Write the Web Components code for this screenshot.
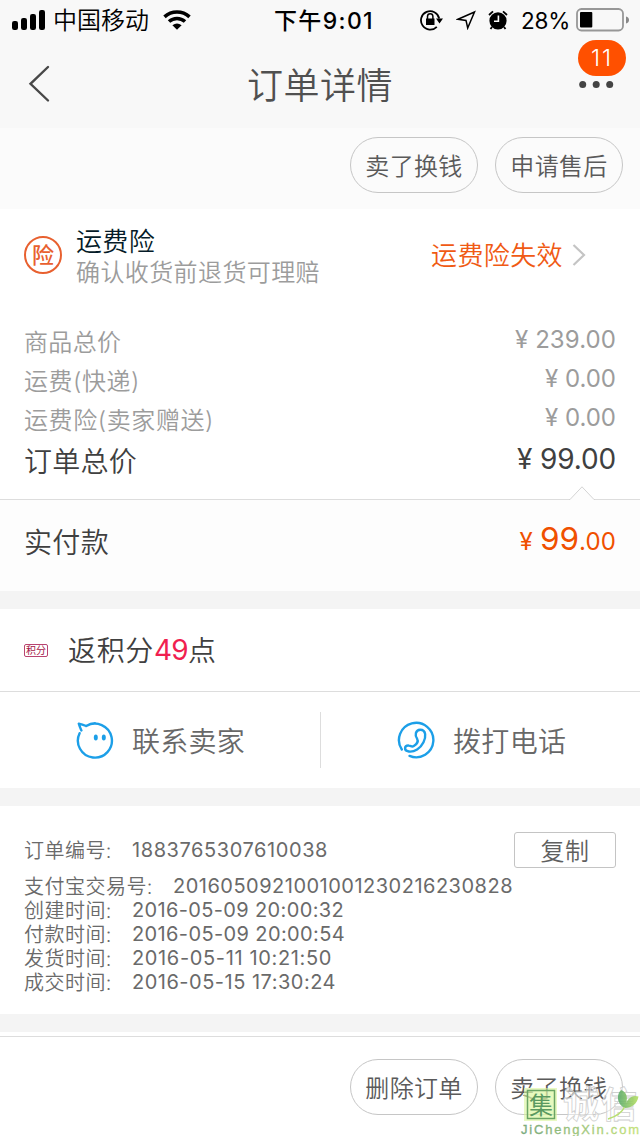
<!DOCTYPE html>
<html lang="zh-CN">
<head>
<meta charset="utf-8">
<title>订单详情</title>
<style>
html, body { margin: 0; background: #fff; }
body { width: 640px; height: 1136px; overflow: hidden; font-family: Inter, "Noto Sans CJK SC", sans-serif; font-weight: 350; }
</style>
</head>
<body>
<order-page></order-page>
<script>
const define = (name, html, after) => customElements.define(name, class extends HTMLElement {
  connectedCallback() {
    if (!this.shadowRoot) this.attachShadow({ mode: 'open' }).innerHTML = html;
    if (after) after(this);
  }
});

/* Text line tracked to a given width: size, w (width), c (colour), wt (weight), pad (space above) */
define('fit-text', `<style>:host{display:block;white-space:pre;line-height:1.2;flex:none}span{display:inline-block}</style><span><slot></slot></span>`, el => {
  const a = n => el.getAttribute(n);
  el.style.fontSize = a('size') + 'px';
  if (a('c')) el.style.color = a('c');
  /* figures are set one step heavier than the Chinese text */
  const wt = a('wt') || (/^[¥\d.:\- ]+$/.test(el.textContent) ? '400' : '');
  if (wt) el.style.fontWeight = wt;
  if (a('pad')) el.style.paddingTop = a('pad') + 'px';
  const w = +a('w');
  if (w) {
    const s = el.shadowRoot.querySelector('span');
    s.style.letterSpacing = (w - s.getBoundingClientRect().width) / [...el.textContent].length + 'px';
    el.style.width = w + 'px';
  }
});

define('pill-button', `<style>
:host{box-sizing:border-box;display:flex;align-items:center;justify-content:center;width:128px;height:56px;border:1px solid #c6c6c6;border-radius:28px;color:#5a5a5a}
</style><fit-text size="24" w="97.4" pad="4"><slot></slot></fit-text>`, el => {
  const t = el.shadowRoot.querySelector('fit-text');
  t.textContent = el.textContent;
  t.shadowRoot.querySelector('span').style.letterSpacing = '.35px';
});

define('section-gap', `<style>:host{display:block;height:18px;background:#f4f4f4}</style>`);

define('status-bar', `<style>
:host{display:flex;align-items:center;height:40px;color:#000}
svg{display:block;flex:none}
.sig{margin-left:12px}.car{margin-left:7px}.wifi{margin-left:14px}.time{margin-left:83px}
.lock{margin-left:46px}.loc{margin-left:12px}.alarm{margin-left:12px}.pct{margin-left:13px}.bat{margin-left:6px}
</style>
<svg class="sig" width="34" height="20" viewBox="0 0 34 20"><rect y="11" width="6" height="9" rx="2.2"/><rect x="9" y="8" width="6" height="12" rx="2.2"/><rect x="18" y="4" width="6" height="16" rx="2.2"/><rect x="27" width="6" height="20" rx="2.2"/></svg>
<fit-text class="car" size="24" w="96" pad="3">中国移动</fit-text>
<svg class="wifi" width="28" height="20" viewBox="0 0 28 20"><path d="M1.5 6.8A18.5 18.5 0 0 1 26.5 6.8M6 11.5A12 12 0 0 1 22 11.5" fill="none" stroke="#000" stroke-width="3.6"/><path d="M14 19.8 9.4 15.2Q14 11.6 18.6 15.2Z"/></svg>
<fit-text class="time" size="23" w="100" wt="500" pad="3">下午9:01</fit-text>
<svg class="lock" width="24" height="22" viewBox="0 0 24 22"><path d="M16.8 17.8A9.2 9.2 0 1 1 19.2 9.5" fill="none" stroke="#000" stroke-width="1.8"/><path d="M16 9.5H23L19.5 14.5ZM6 9.5H14.5V16H6Z"/><path d="M7.5 10V7.5a2.7 2.7 0 0 1 5.4 0V10" fill="none" stroke="#000" stroke-width="1.5"/></svg>
<svg class="loc" width="20" height="20" viewBox="0 0 20 20"><path d="M18.5 2 2 9.3 10 10.4 11.7 18Z" fill="none" stroke="#000" stroke-width="1.5"/></svg>
<svg class="alarm" width="20" height="20" viewBox="0 0 20 20"><circle cx="10" cy="10.8" r="8.6"/><path d="M1 5 5 1.4M15 1.4 19 5M4 17 2.5 19M16 17 17.5 19" fill="none" stroke="#000" stroke-width="1.8"/><path d="M10.4 5.5V11.2H6" fill="none" stroke="#fff" stroke-width="1.6"/></svg>
<fit-text class="pct" size="22.5" w="49" wt="400" pad="1">28%</fit-text>
<svg class="bat" width="54" height="24" viewBox="0 0 54 24"><rect x="1" y="1" width="46" height="21.5" rx="4.5" fill="none" stroke="#979797" stroke-width="1.8"/><rect x="4" y="4" width="12.3" height="15.5" rx="1"/><path d="M50 8.5Q53 9.3 53 12T50 15.5Z" fill="#888"/></svg>`);

define('nav-bar', `<style>
:host{display:grid;grid-template-columns:80px 1fr 80px;align-items:center;height:88px;position:relative;color:#505050}
.back{margin-left:28px;margin-top:0;display:block}.t{justify-self:center;margin-top:2px}
.dots{display:block;justify-self:end;margin-right:26px}
.badge{position:absolute;right:14px;top:0;width:48px;height:36px;border-radius:18px;background:#ff5000;color:#fff;display:flex;align-items:center;justify-content:center}
</style>
<svg class="back" width="22" height="38" viewBox="0 0 22 38"><path d="M20 2 2.5 18.8 20 35.5" fill="none" stroke="#484848" stroke-width="2.4" stroke-linecap="round"/></svg>
<fit-text class="t" size="36" w="146" pad="4">订单详情</fit-text>
<svg class="dots" width="35" height="8" viewBox="0 0 35 8" fill="#444"><circle cx="3.7" cy="4.5" r="3.5"/><circle cx="17.2" cy="4.5" r="3.5"/><circle cx="30.7" cy="4.5" r="3.5"/></svg>
<div class="badge"><fit-text size="23" w="22" pad="2" wt="350">11</fit-text></div>`);

define('insurance-row', `<style>
:host{display:flex;height:102px;align-items:flex-start}
svg{display:block;flex:none}
.seal{box-sizing:border-box;width:38px;height:38px;margin:27px 0 0 24px;border:2px solid #e8602f;border-radius:50%;display:flex;align-items:center;justify-content:center;color:#e8602f}
.txt{margin:17px 0 0 14px;display:grid;gap:2px;flex:1}
.st{margin:31px 0 0}.arr{margin:35px 54px 0 9px}
</style>
<div class="seal"><fit-text size="22" wt="500" pad="1">险</fit-text></div>
<div class="txt"><fit-text size="26" w="79" c="#051b28">运费险</fit-text><fit-text size="24" w="244" c="#9c9c9c">确认收货前退货可理赔</fit-text></div>
<fit-text class="st" size="26" w="132" c="#f05a14">运费险失效</fit-text>
<svg class="arr" width="14" height="22" viewBox="0 0 14 22"><path d="M1.5 1 12 11 1.5 21" fill="none" stroke="#c4c4c4" stroke-width="2.2"/></svg>`);

define('price-row', `<style>:host{display:flex;justify-content:space-between;align-items:center;height:39px;padding:0 24px;color:#9c9c9c}::slotted([slot=v]){margin-top:-3px}</style><slot></slot><slot name="v"></slot>`);

define('price-list', `<style>:host{display:block;height:188px;padding-top:11px;box-sizing:border-box}.total{height:43px;color:#404040}</style>
<price-row><fit-text size="24" w="97.4" pad="3">商品总价</fit-text><fit-text slot="v" size="24" w="101">¥ 239.00</fit-text></price-row>
<price-row><fit-text size="24" w="116" pad="3">运费(快递)</fit-text><fit-text slot="v" size="24" w="71">¥ 0.00</fit-text></price-row>
<price-row><fit-text size="24" w="190" pad="3">运费险(卖家赠送)</fit-text><fit-text slot="v" size="24" w="71">¥ 0.00</fit-text></price-row>
<price-row class="total"><fit-text size="28" w="113" pad="5">订单总价</fit-text><fit-text slot="v" size="28" w="99" pad="2">¥ 99.00</fit-text></price-row>`);

define('paid-row', `<style>
:host{display:flex;align-items:center;justify-content:space-between;box-sizing:border-box;height:92px;padding:0 24px 6px;border-top:1px solid #ddd;background:#fdfdfd;position:relative}
svg{position:absolute;left:569px;top:-14px}.v{display:flex;align-items:baseline;margin-top:-7px}
</style>
<svg width="26" height="15" viewBox="0 0 26 15"><path d="M0 13.5H1L13 .8 25 13.5H26V15H0Z" fill="#fdfdfd"/><path d="M0 13.5H1L13 .8 25 13.5H26" fill="none" stroke="#d4d4d4"/></svg>
<fit-text size="28" w="85" c="#404040" pad="3">实付款</fit-text>
<div class="v"><fit-text size="24" w="20.5" c="#f05000">¥ </fit-text><fit-text size="31.5" w="39" c="#f05000">99</fit-text><fit-text size="24" w="37" c="#f05000">.00</fit-text></div>`);

define('points-row', `<style>
:host{display:flex;align-items:center;height:82px;color:#404040}
.tag{box-sizing:border-box;width:24px;height:13px;margin-left:24px;border:1px solid #b84370;border-radius:2px;display:flex;align-items:center;justify-content:center}
.t{display:flex;margin-left:20px}
</style>
<div class="tag"><fit-text size="10" w="20" c="#a51646" wt="400">积分</fit-text></div>
<div class="t"><fit-text size="28" w="86" pad="4">返积分</fit-text><fit-text size="28" w="34" c="#f01f50" pad="3">49</fit-text><fit-text size="28" pad="4">点</fit-text></div>`);

define('contact-row', `<style>
:host{display:grid;grid-template-columns:320px 1px 1fr;align-items:center;box-sizing:border-box;height:97px;border-top:1px solid #ddd;color:#686868}
div{display:flex;align-items:center;gap:17px}.a{padding-left:75px}.b{padding-left:76px;gap:16px}
i{display:block;height:56px;background:#ddd}svg{display:block;flex:none}
</style>
<div class="a"><svg width="40" height="40" viewBox="0 0 40 40" fill="none" stroke="#1c9fe8" stroke-width="2.4" stroke-linecap="round" stroke-linejoin="round"><path d="M4.6 13.2A17 17 0 1 0 11.2 6Q7.2 4.4 3.8 3.6Q4.8 7 6.4 10.4M11.2 6Q15.5 3.3 20 3.3"/><ellipse cx="20.8" cy="17.5" rx="1" ry="2" fill="#1c9fe8" stroke-width="2"/><ellipse cx="28.8" cy="17.5" rx="1" ry="2" fill="#1c9fe8" stroke-width="2"/></svg><fit-text size="28" w="113" pad="5">联系卖家</fit-text></div>
<i></i>
<div class="b"><svg width="40" height="40" viewBox="0 0 40 40" fill="none" stroke="#1c9fe8" stroke-width="2.4" stroke-linecap="round" stroke-linejoin="round"><path d="M4.8 29.5A17.2 17.2 0 1 1 12.5 35.9"/><path d="M20 18.5C17.8 15.8 18.2 9.8 23.2 9.7C29.5 9.7 29 17.5 26.5 22.2C23.5 28.3 17.4 32.2 11.8 31.5C6.4 30.8 7.2 25.2 12 25.6C14.2 25.7 14.6 27.3 16.8 26C19.8 24.2 21.5 21.3 20 18.5Z"/></svg><fit-text size="28" w="113.5" pad="5">拨打电话</fit-text></div>`);

define('info-line', `<style>:host{display:flex;align-items:center;height:24px;gap:20px}</style><slot></slot>`);

define('order-info', `<style>
:host{display:block;box-sizing:border-box;height:208px;padding:26px 24px 0;color:#6a6a6a}
.head{height:36px;margin-bottom:6px}
.copy{box-sizing:border-box;width:102px;height:36px;margin-left:auto;border:1px solid #c4c4c4;border-radius:3px;display:flex;align-items:center;justify-content:center;color:#5f5f5f}
</style>
<info-line class="head"><fit-text size="20" w="88" pad="2">订单编号:</fit-text><fit-text size="20" w="196">1883765307610038</fit-text><div class="copy"><fit-text size="24" w="49" pad="4">复制</fit-text></div></info-line>
<info-line><fit-text size="20" w="129" pad="2">支付宝交易号:</fit-text><fit-text size="20" w="340">2016050921001001230216230828</fit-text></info-line>
<info-line><fit-text size="20" w="88" pad="2">创建时间:</fit-text><fit-text size="20" w="212">2016-05-09 20:00:32</fit-text></info-line>
<info-line><fit-text size="20" w="88" pad="2">付款时间:</fit-text><fit-text size="20" w="213">2016-05-09 20:00:54</fit-text></info-line>
<info-line><fit-text size="20" w="88" pad="2">发货时间:</fit-text><fit-text size="20" w="200">2016-05-11 10:21:50</fit-text></info-line>
<info-line><fit-text size="20" w="88" pad="2">成交时间:</fit-text><fit-text size="20" w="204">2016-05-15 17:30:24</fit-text></info-line>`);

define('site-mark', `<style>
:host{position:absolute;right:0;bottom:0;width:120px;height:50px;display:block}
svg{display:block}
</style>
<svg width="120" height="50" viewBox="0 0 120 50">
<defs><linearGradient id="g"><stop stop-color="#79aa7d"/><stop offset="1" stop-color="#c4e27c"/></linearGradient><linearGradient id="l"><stop stop-color="#5cab6b"/><stop offset="1" stop-color="#b5df62"/></linearGradient></defs>
<rect x="4" y="2" width="33" height="33" fill="#d9f59a" opacity=".6"/><rect x="7.5" y="4.5" width="27" height="28" fill="#e2f9b6" fill-opacity=".3" stroke="#6aa564" stroke-width="1.5"/>
<text x="9" y="27.5" font-size="24" font-weight="400" fill="#5a9960" font-family="Noto Sans CJK SC">集</text>
<text x="43" y="32" font-size="36" font-weight="700" textLength="74" fill="#fff" fill-opacity=".5" stroke="#cfcfcf" stroke-width=".8" font-family="Noto Sans CJK SC">诚信</text>
<path d="M104.500 22C97 18 96 9 101 4C107 6 109 12 104.500 22C107 12 112 8.500 118.500 10.500C117 18 112 22 104.500 22Z" fill="url(#l)" opacity=".9"/><path d="M104.500 21Q101 29 88 33" fill="none" stroke="#b8df72" stroke-width="1.5"/>
<text x="1" y="48" font-size="13" font-weight="400" stroke="url(#g)" stroke-width=".3" textLength="118" fill="url(#g)" font-family="Liberation Sans">JiChengXin.com</text>
</svg>`);

define('order-page', `<style>
:host{display:flex;flex-direction:column;width:640px;height:1136px;background:#fff;position:relative;overflow:hidden}
header{background:#f8f8f8;height:128px}
.acts{display:flex;justify-content:flex-end;gap:17px;padding-right:17px}
.top{height:72px;padding-top:9px;background:#fbfbfb}
footer{box-sizing:border-box;height:100px;margin-top:4px;padding-top:22px;border-top:1px solid #ddd}
</style>
<header><status-bar></status-bar><nav-bar></nav-bar></header>
<div class="acts top"><pill-button>卖了换钱</pill-button><pill-button>申请售后</pill-button></div>
<insurance-row></insurance-row>
<price-list></price-list>
<paid-row></paid-row>
<section-gap></section-gap>
<points-row></points-row>
<contact-row></contact-row>
<section-gap></section-gap>
<order-info></order-info>
<section-gap></section-gap>
<footer class="acts"><pill-button>删除订单</pill-button><pill-button>卖了换钱</pill-button></footer>
<site-mark></site-mark>`);
</script>
</body>
</html>
